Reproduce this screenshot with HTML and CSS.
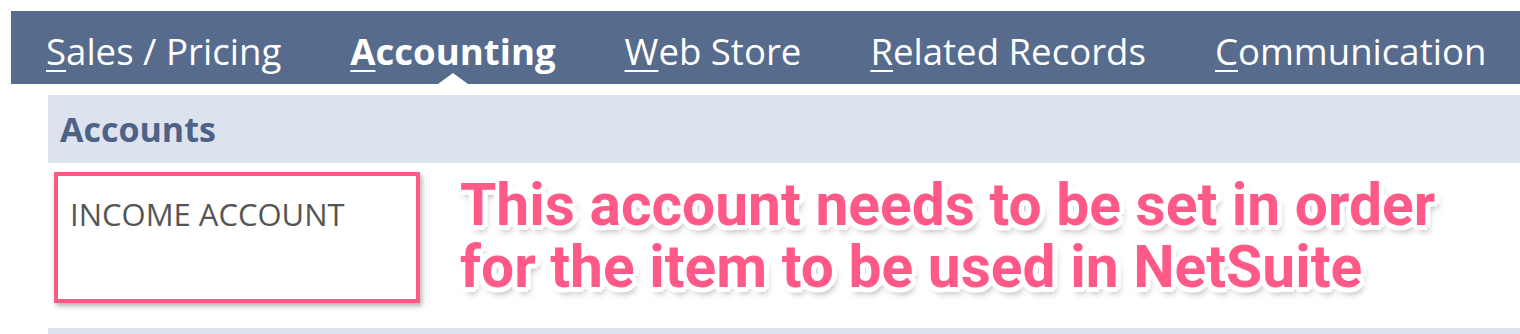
FILE: index.html
```html
<!DOCTYPE html>
<html>
<head>
<meta charset="utf-8">
<link rel="stylesheet" href="styles.css">
</head>
<body>
<div class="page">
  <nav class="tabs">
    <span class="tab"><u>S</u>ales / Pricing</span>
    <span class="tab active"><u>A</u>ccounting</span>
    <span class="tab"><u>W</u>eb Store</span>
    <span class="tab"><u>R</u>elated Records</span>
    <span class="tab"><u>C</u>ommunication</span>
  </nav>
  <div class="section">
    <div class="section-head">Accounts</div>
    <div class="section-body">
      <div class="field">INCOME ACCOUNT</div>
      <div class="callout">This account needs to be set in order<br>for the item to be used in NetSuite</div>
    </div>
    <div class="section-foot"></div>
  </div>
</div>
</body>
</html>
```
FILE: styles.css
```css
html, body {
  margin: 0;
  padding: 0;
  background: #ffffff;
}
.page {
  width: 1520px;
  height: 334px;
  overflow: hidden;
  padding-top: 11px;
  box-sizing: border-box;
}
.tabs {
  margin-left: 11px;
  height: 73px;
  background: #576b8c;
  display: flex;
  align-items: flex-start;
  gap: 69px;
  padding-left: 35px;
  box-sizing: border-box;
  font-family: "Open Sans", sans-serif;
  font-size: 36.6px;
  color: #ffffff;
}
.tab {
  position: relative;
  line-height: 48px;
  padding-top: 16px;
  white-space: nowrap;
}
.tab u {
  text-decoration-thickness: 2px;
  text-underline-offset: 5px;
}
.tab.active {
  font-weight: 700;
}
.tab.active::after {
  content: "";
  position: absolute;
  left: 50%;
  bottom: -9px;
  margin-left: -15px;
  width: 0;
  height: 0;
  border-left: 15px solid transparent;
  border-right: 15px solid transparent;
  border-bottom: 11px solid #ffffff;
}
.section {
  margin-left: 48px;
  margin-top: 11px;
}
.section-head {
  height: 68px;
  background: #dce3ee;
  font-family: "Open Sans", sans-serif;
  font-weight: 700;
  font-size: 34px;
  line-height: 68px;
  padding-left: 12px;
  color: #4d6286;
}
.section-body {
  display: flex;
  align-items: flex-start;
  padding-top: 9px;
  height: 165px;
  box-sizing: border-box;
  margin-left: 6px;
}
.field {
  width: 366px;
  height: 131px;
  box-sizing: border-box;
  border: 4px solid #ff5a85;
  box-shadow: 2px 3px 5px rgba(0,0,0,0.3);
  font-family: "Open Sans", sans-serif;
  font-size: 31px;
  color: #555555;
  padding: 16px 0 0 12px;
  line-height: 44px;
}
.callout {
  margin-left: 40px;
  margin-top: 2px;
  font-family: Roboto, sans-serif;
  font-weight: 700;
  font-size: 58.7px;
  line-height: 62px;
  color: #ff5a87;
  text-shadow:
    0 0 3px #fff, 4px 0 0 #fff, -4px 0 0 #fff, 0 4px 0 #fff, 0 -4px 0 #fff,
    3px 3px 0 #fff, -3px 3px 0 #fff, 3px -3px 0 #fff, -3px -3px 0 #fff,
    5px 2px 0 #fff, -5px 2px 0 #fff, 2px 5px 0 #fff, 2px -5px 0 #fff,
    5px -2px 0 #fff, -5px -2px 0 #fff, -2px 5px 0 #fff, -2px -5px 0 #fff,
    3px 6px 7px rgba(0,0,0,0.35);
}
.section-foot {
  height: 6px;
  background: #dce3ee;
}
```
